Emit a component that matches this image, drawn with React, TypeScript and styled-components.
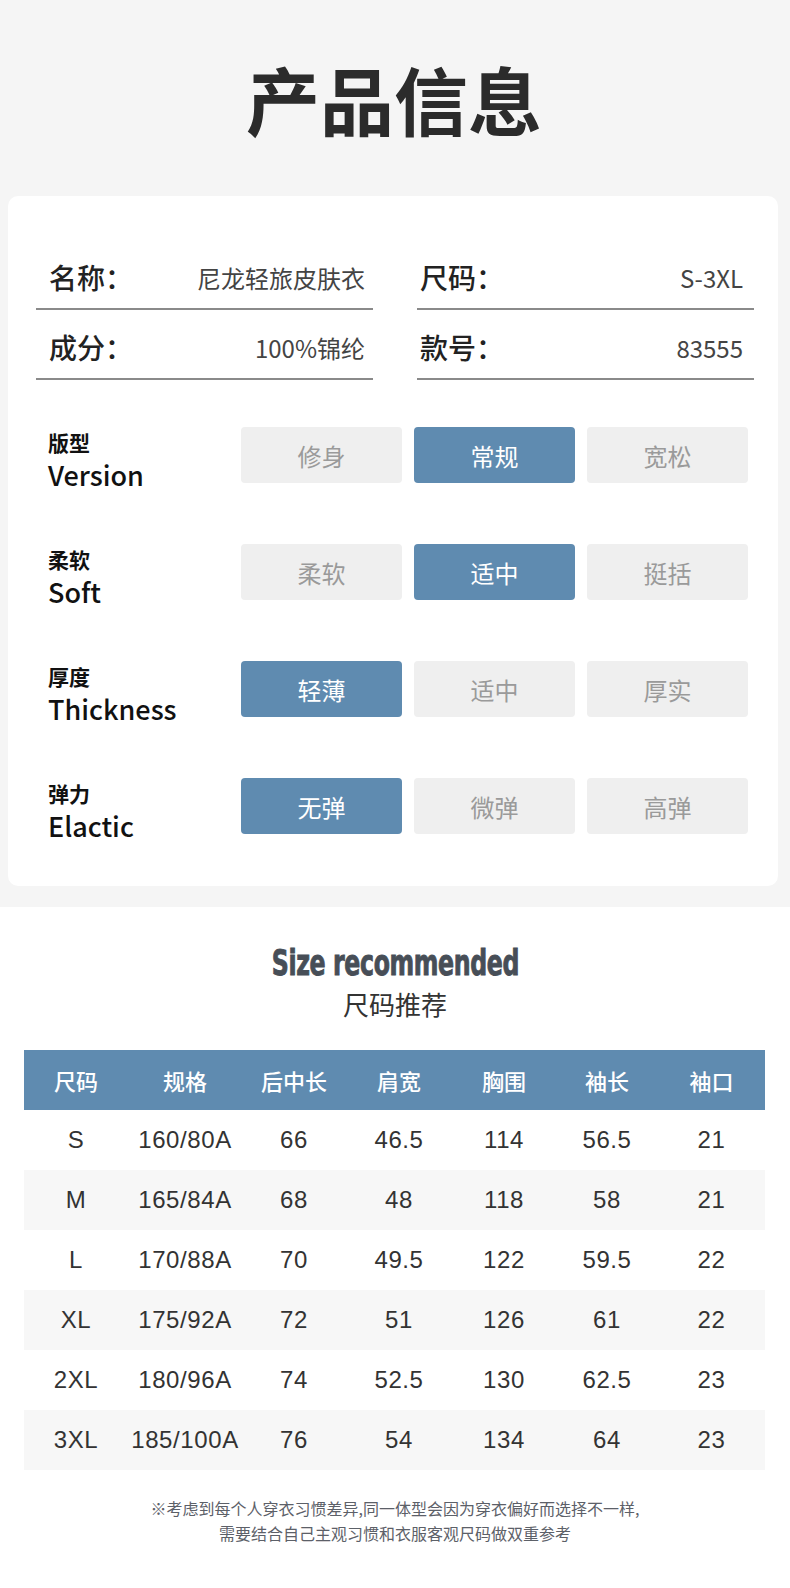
import styled, { createGlobalStyle } from "styled-components";

const GlobalStyle = createGlobalStyle`
  body {
    margin: 0;
    background: #ffffff;
    font-family: "Noto Sans CJK SC", "Noto Sans", sans-serif;
  }
`;

const Page = styled.div`
  width: 790px;
  min-height: 1588px;
  background: #ffffff;
`;

const GreySection = styled.section`
  background: #f5f5f5;
  padding: 0 12px 21px 8px;
`;

const TitleBar = styled.div`
  height: 196px;
  display: flex;
  align-items: center;
  justify-content: center;
  padding-left: 2px;
`;

const Title = styled.h1`
  margin: 0;
  font-size: 74px;
  line-height: 1;
  font-weight: 700;
  color: #2b2b2b;
`;

const Card = styled.div`
  background: #ffffff;
  border-radius: 10px;
  padding: 44px 24px 52px 28px;
`;

const InfoGrid = styled.div`
  display: grid;
  grid-template-columns: 337px 337px;
  column-gap: 44px;
`;

const InfoCell = styled.div<{ $right?: boolean }>`
  height: 70px;
  box-sizing: border-box;
  padding: 6px ${(p) => (p.$right ? "11px" : "8px")} 0 ${(p) => (p.$right ? "3px" : "13px")};
  display: flex;
  align-items: center;
  justify-content: space-between;
  border-bottom: 2px solid #8a8a8a;
`;

const InfoLabel = styled.span`
  font-size: 28px;
  font-weight: 500;
  color: #222;
`;

const InfoValue = styled.span`
  font-size: 24px;
  font-weight: 400;
  color: #444;
`;

const AttrList = styled.div`
  margin-top: 47px;
  display: flex;
  flex-direction: column;
  gap: 61px;
`;

const AttrRow = styled.div`
  height: 56px;
  display: grid;
  grid-template-columns: 193px 161px 161px 161px;
  column-gap: 12px;
  align-items: start;
`;

const AttrLabel = styled.div`
  display: flex;
  flex-direction: column;
  padding-left: 12px;
`;

const AttrZh = styled.span`
  font-size: 21px;
  line-height: 30px;
  font-weight: 700;
  color: #111;
`;

const AttrEn = styled.span`
  font-size: 27px;
  line-height: 36px;
  font-weight: 500;
  color: #111;
`;

const Choice = styled.div<{ $active?: boolean }>`
  height: 56px;
  border-radius: 4px;
  display: flex;
  align-items: center;
  justify-content: center;
  font-size: 24px;
  background: ${(p) => (p.$active ? "#5f8bb0" : "#efefef")};
  color: ${(p) => (p.$active ? "#ffffff" : "#9a9a9a")};
`;

const SizeSection = styled.section`
  padding-top: 36px;
  display: flex;
  flex-direction: column;
  align-items: center;
`;

const SizeHeading = styled.h2`
  margin: 0;
  font-family: "DejaVu Sans Condensed", "Liberation Sans", sans-serif;
  font-size: 36px;
  line-height: 40px;
  font-weight: 700;
  color: #474e57;
  letter-spacing: -0.5px;
  -webkit-text-stroke: 0.9px #474e57;
  transform: scaleX(0.73);
`;

const SizeSub = styled.div`
  margin-top: 4px;
  font-size: 26px;
  line-height: 34px;
  color: #333;
`;

const Table = styled.div`
  margin-top: 29px;
  width: 741px;
  align-self: flex-start;
  margin-left: 24px;
`;

const Row = styled.div<{ $head?: boolean; $shade?: boolean }>`
  display: grid;
  grid-template-columns: 104px 114px 104px 106px 104px 102px 107px;
  height: 60px;
  align-items: center;
  background: ${(p) => (p.$head ? "#5f8bb0" : p.$shade ? "#f7f7f7" : "#ffffff")};
`;

const HeadCell = styled.div`
  text-align: center;
  font-size: 22px;
  font-weight: 500;
  color: #ffffff;
`;

const Cell = styled.div`
  text-align: center;
  font-family: "Liberation Sans", Arial, sans-serif;
  font-size: 24px;
  letter-spacing: 0.6px;
  color: #333;
`;

const Note = styled.p`
  margin: 26px 0 0;
  text-align: center;
  font-size: 16px;
  line-height: 25px;
  color: #5c6068;
`;

const info = [
  ["名称：", "尼龙轻旅皮肤衣"],
  ["尺码：", "S-3XL"],
  ["成分：", "100%锦纶"],
  ["款号：", "83555"],
];

const attrs = [
  { zh: "版型", en: "Version", options: ["修身", "常规", "宽松"], active: 1 },
  { zh: "柔软", en: "Soft", options: ["柔软", "适中", "挺括"], active: 1 },
  { zh: "厚度", en: "Thickness", options: ["轻薄", "适中", "厚实"], active: 0 },
  { zh: "弹力", en: "Elactic", options: ["无弹", "微弹", "高弹"], active: 0 },
];

const heads = ["尺码", "规格", "后中长", "肩宽", "胸围", "袖长", "袖口"];

const sizes = [
  ["S", "160/80A", "66", "46.5", "114", "56.5", "21"],
  ["M", "165/84A", "68", "48", "118", "58", "21"],
  ["L", "170/88A", "70", "49.5", "122", "59.5", "22"],
  ["XL", "175/92A", "72", "51", "126", "61", "22"],
  ["2XL", "180/96A", "74", "52.5", "130", "62.5", "23"],
  ["3XL", "185/100A", "76", "54", "134", "64", "23"],
];

const App = () => {
  return (
    <Page>
      <GlobalStyle />
      <GreySection>
        <TitleBar>
          <Title>产品信息</Title>
        </TitleBar>
        <Card>
          <InfoGrid>
            {info.map(([label, value], i) => (
              <InfoCell key={label} $right={i % 2 === 1}>
                <InfoLabel>{label}</InfoLabel>
                <InfoValue>{value}</InfoValue>
              </InfoCell>
            ))}
          </InfoGrid>

          <AttrList>
            {attrs.map((a) => (
              <AttrRow key={a.en}>
                <AttrLabel>
                  <AttrZh>{a.zh}</AttrZh>
                  <AttrEn>{a.en}</AttrEn>
                </AttrLabel>
                {a.options.map((o, i) => (
                  <Choice key={o} $active={i === a.active}>
                    {o}
                  </Choice>
                ))}
              </AttrRow>
            ))}
          </AttrList>
        </Card>
      </GreySection>

      <SizeSection>
        <SizeHeading>Size recommended</SizeHeading>
        <SizeSub>尺码推荐</SizeSub>
        <Table>
          <Row $head>
            {heads.map((h) => (
              <HeadCell key={h}>{h}</HeadCell>
            ))}
          </Row>
          {sizes.map((r, i) => (
            <Row key={r[0]} $shade={i % 2 === 1}>
              {r.map((c, j) => (
                <Cell key={j}>{c}</Cell>
              ))}
            </Row>
          ))}
        </Table>
        <Note>
          ※考虑到每个人穿衣习惯差异,同一体型会因为穿衣偏好而选择不一样,
          <br />
          需要结合自己主观习惯和衣服客观尺码做双重参考
        </Note>
      </SizeSection>
    </Page>
  );
};

export default App;
